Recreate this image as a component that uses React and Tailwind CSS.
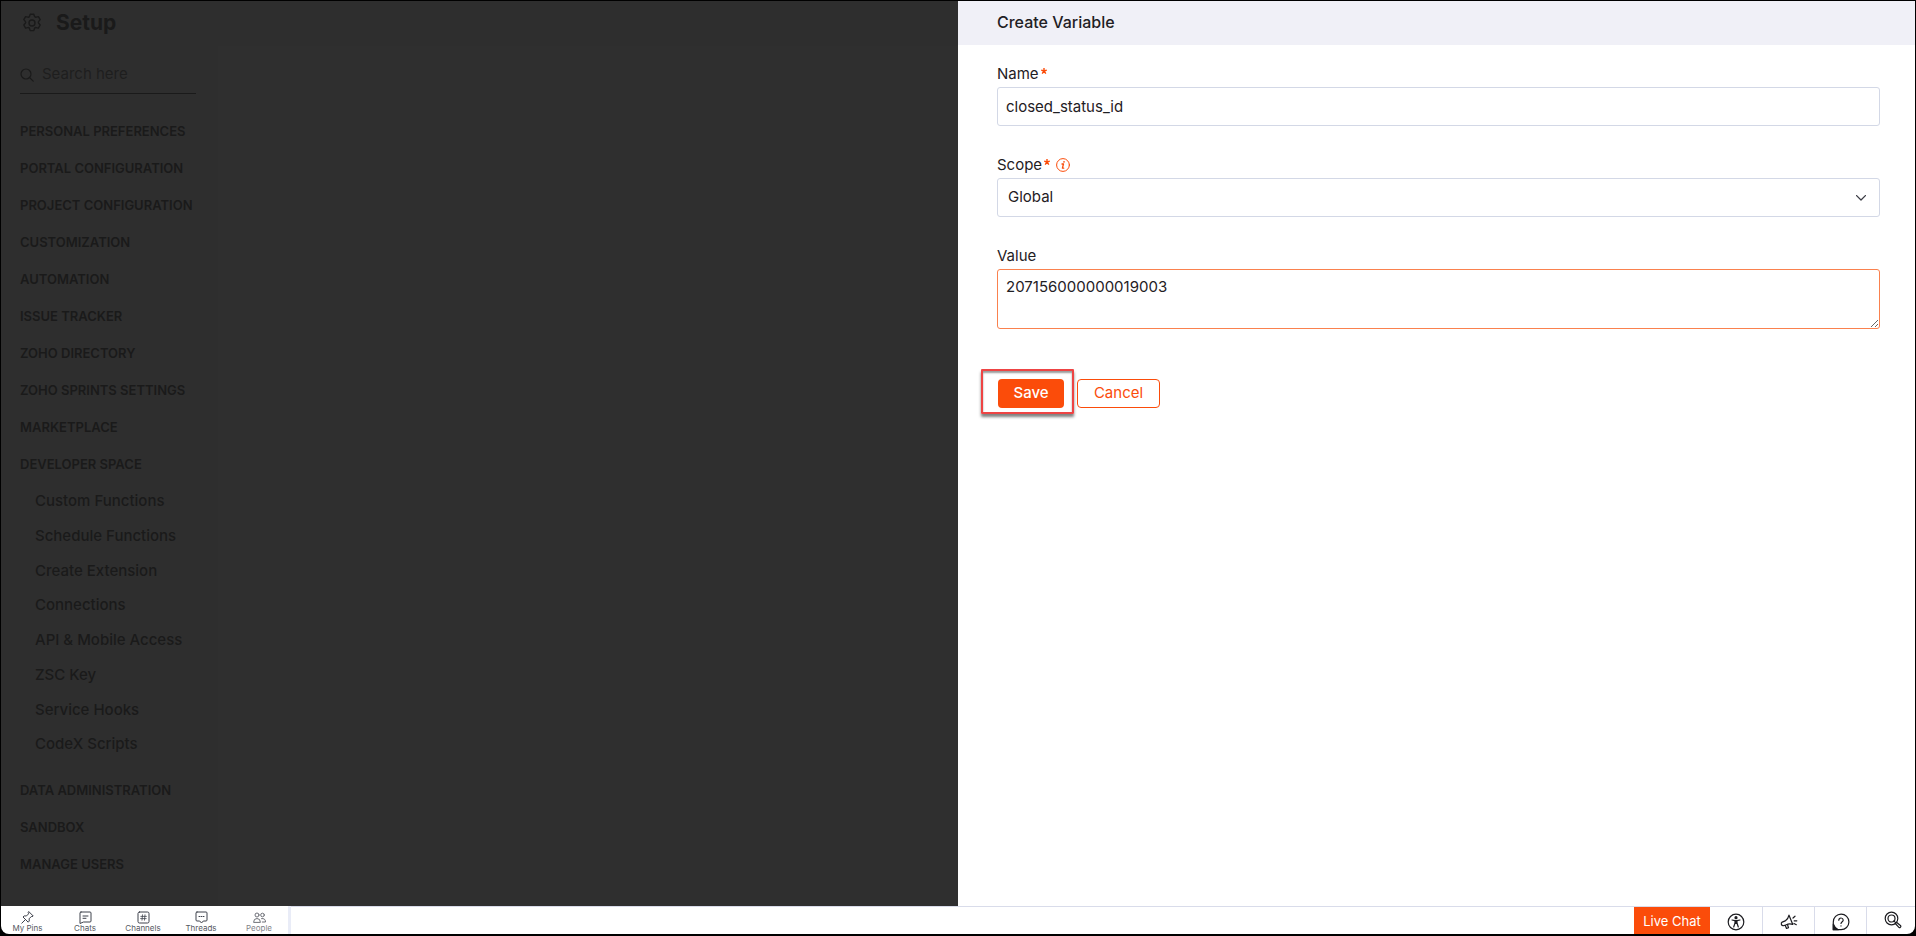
import { useState } from "react";

const topSections = [
  "PERSONAL PREFERENCES",
  "PORTAL CONFIGURATION",
  "PROJECT CONFIGURATION",
  "CUSTOMIZATION",
  "AUTOMATION",
  "ISSUE TRACKER",
  "ZOHO DIRECTORY",
  "ZOHO SPRINTS SETTINGS",
  "MARKETPLACE",
  "DEVELOPER SPACE",
];

const developerItems = [
  "Custom Functions",
  "Schedule Functions",
  "Create Extension",
  "Connections",
  "API & Mobile Access",
  "ZSC Key",
  "Service Hooks",
  "CodeX Scripts",
];

const bottomSections = ["DATA ADMINISTRATION", "SANDBOX", "MANAGE USERS"];

function Icon({ className, children, viewBox = "0 0 24 24", width = 1.5 }) {
  return (
    <svg
      className={className}
      viewBox={viewBox}
      fill="none"
      stroke="currentColor"
      strokeWidth={width}
      strokeLinecap="round"
      strokeLinejoin="round"
      aria-hidden="true"
    >
      {children}
    </svg>
  );
}

function SectionLink({ label }) {
  return (
    <li>
      <a href="#" className="flex h-[37px] items-center text-[13px] font-semibold whitespace-nowrap">
        {label}
      </a>
    </li>
  );
}

function Sidebar() {
  return (
    <aside className="flex w-[217px] shrink-0 flex-col text-[#1a1a1a]">
      <header className="flex h-[43px] items-center gap-[14px] pl-[21px]">
        <Icon className="size-5" viewBox="0 0 20 20" width={1.4}>
          <circle cx="10" cy="10" r="3" />
          <path d="M8.2 1.2h3.6l.7 2.2q.5 1 1.7.7l2.2-.5 1.8 3-1.5 1.8q-.8.9 0 1.9l1.5 1.7-1.8 3.1-2.3-.5q-1.100-.2-1.600.8l-.7 2.200H8.200l-.7-2.200q-.5-1-1.700-.8l-2.200.5-1.800-3.100 1.500-1.700q.8-1 0-1.900L1.800 6.600l1.800-3 2.200.5q1.200.3 1.700-.7z" />
        </Icon>
        <h1 className="text-[21px] leading-7 font-bold">Setup</h1>
      </header>
      <div className="mr-[22px] ml-[19px] flex h-[50px] items-center gap-2 border-b border-[#1a1a1a] pt-[12px]">
        <Icon className="size-[14px] shrink-0" viewBox="0 0 14 14" width={1.2}>
          <circle cx="6" cy="6" r="5" />
          <path d="M9.500 9.500L13.200 13.200" />
        </Icon>
        <input
          type="search"
          aria-label="Search here"
          placeholder="Search here"
          className="w-full min-w-0 bg-transparent pb-px text-[15px] text-[#1a1a1a] outline-none placeholder:text-[#1e1e1e]"
        />
      </div>
      <nav className="pt-[19px] pl-[19px]">
        <ul>
          {topSections.map((s) => (
            <SectionLink key={s} label={s} />
          ))}
        </ul>
        <ul className="mt-px mb-[10px] grid h-[278px] pl-[15px] text-[15px] font-medium">
          {developerItems.map((s) => (
            <li key={s} className="flex items-center">
              <a href="#" className="whitespace-nowrap">
                {s}
              </a>
            </li>
          ))}
        </ul>
        <ul>
          {bottomSections.map((s) => (
            <SectionLink key={s} label={s} />
          ))}
        </ul>
      </nav>
    </aside>
  );
}

function Required() {
  return (
    <svg className="mb-[6px] ml-[2px] size-[6px]" viewBox="0 0 6 6" stroke="#fb4c0a" strokeWidth="1.4" aria-hidden="true">
      <path d="M3 0V3M.2 2.200L3 3M5.800 2.200L3 3M1.200 5.600L3 3M4.800 5.600L3 3" />
    </svg>
  );
}

function VariablePanel() {
  const [name, setName] = useState("closed_status_id");
  const [scope, setScope] = useState("Global");
  const [value, setValue] = useState("207156000000019003");
  return (
    <section className="flex-1 bg-white text-[#1f2024]">
      <header className="flex h-11 items-center bg-[#f0f0f7] pb-[2px] pl-[39px]">
        <h2 className="text-base font-medium">Create Variable</h2>
      </header>
      <form className="flex flex-col pt-[18px] pr-[35px] pl-[39px]" onSubmit={(e) => e.preventDefault()}>
        <label htmlFor="name" className="mb-[2px] flex h-[22px] items-center text-[15px]">
          Name
          <Required />
        </label>
        <input
          id="name"
          value={name}
          onChange={(e) => setName(e.target.value)}
          className="mb-7 h-[39px] rounded-[3px] border border-[#d3d8e6] px-2 text-[15px] outline-none"
        />
        <div className="mb-[2px] flex h-[22px] items-center">
          <label htmlFor="scope" className="flex items-center text-[15px]">
            Scope
            <Required />
          </label>
          <button type="button" aria-label="About scope" className="ml-[6px] text-[#fb4c0a]">
            <Icon className="size-[14px]" viewBox="0 0 14 14" width={1}>
              <circle cx="7" cy="7" r="6.400" />
              <path d="M6 6h1.500L6.400 10.200h1.300" strokeWidth="1.300" />
              <path d="M8 3.700v.2" strokeWidth="1.600" />
            </Icon>
          </button>
        </div>
        <div className="mb-7 grid items-center">
          <select
            id="scope"
            value={scope}
            onChange={(e) => setScope(e.target.value)}
            className="col-start-1 row-start-1 h-[39px] appearance-none rounded-[3px] border border-[#d3d8e6] px-[10px] text-[15px] outline-none"
          >
            <option>Global</option>
          </select>
          <Icon className="pointer-events-none col-start-1 row-start-1 mr-[14px] h-[6px] w-[10px] justify-self-end text-[#3c3d45]" viewBox="0 0 10 6" width={1.300}>
            <path d="M.6.600L5 5L9.400.600" />
          </Icon>
        </div>
        <label htmlFor="value" className="mb-[2px] flex h-[22px] items-center text-[15px]">
          Value
        </label>
        <textarea
          id="value"
          value={value}
          onChange={(e) => setValue(e.target.value)}
          className="h-[60px] rounded-[3px] border border-[#fa814e] px-2 py-[7px] text-[15px] leading-5 outline-none"
        />
        <div className="mt-10 -ml-4 flex items-baseline gap-[3px]">
          <div className="rounded-[1px] border-2 border-[#ee4444] pt-2 pr-2 pb-1 pl-[15px] shadow-[0_3px_3px_rgba(0,0,0,0.5),inset_0_2px_2px_rgba(0,0,0,0.4)]">
            <button type="submit" className="h-[29px] w-[66px] rounded-[4px] bg-[#fb4c0a] text-[15px] font-medium text-white">
              Save
            </button>
          </div>
          <button type="button" className="h-[29px] w-[83px] rounded-[4px] border border-[#fb4c0a] text-[15px] text-[#fb4c0a]">
            Cancel
          </button>
        </div>
      </form>
    </section>
  );
}

function ChatTab({ label, className = "w-[58px]", children }) {
  return (
    <button type="button" className={`flex flex-col items-center pt-[5px] text-[#3f424c] ${className}`}>
      <Icon className="size-[13px]" viewBox="0 0 13 13" width={1}>
        {children}
      </Icon>
      <span className="text-[8px] leading-[9px] whitespace-nowrap text-[#555862]">{label}</span>
    </button>
  );
}

function ToolButton({ label, children, className = "w-[52px] border-l" }) {
  return (
    <button type="button" aria-label={label} className={`flex items-center justify-center border-[#d9dcea] pt-[2px] text-[#1c1c20] ${className}`}>
      <Icon className="size-[18px]" viewBox="0 0 18 18" width={1.200}>
        {children}
      </Icon>
    </button>
  );
}

function BottomBar() {
  return (
    <footer className="flex h-7 overflow-hidden rounded-b-[8px] bg-white">
      <div className="flex border-r-[3px] border-[#e9ecf7]">
        <ChatTab label="My Pins" className="w-[55px] pr-[2px]">
          <path d="M8 .8l4.200 4.200-1.200.7-.7-.2-2.200 2.300.2 2.200-1.100 1.200L2 6l1.200-1.100 2.200.1L7.600 2.800 7.300 2zM4.400 8.600L.8 12.200" />
        </ChatTab>
        <ChatTab label="Chats">
          <path d="M2 1h9q1 0 1 1v8q0 1-1 1H4.500L1 12.500V2q0-1 1-1zM4 5h5M4 7.300h3" />
        </ChatTab>
        <ChatTab label="Channels">
          <rect x="1" y="1" width="11" height="11" rx="1.500" />
          <path d="M5.500 3.800L5 9.200M8 3.800l-.5 5.400M3.800 5.400h5.600M3.600 7.600h5.600" strokeWidth=".8" />
        </ChatTab>
        <ChatTab label="Threads">
          <path d="M2 1h9q1 0 1 1v7q0 1-1 1H8.300L6.500 12 4.700 10H2q-1 0-1-1V2q0-1 1-1zM4 5.500h.8M6.100 5.500h.8M8.200 5.500H9" />
        </ChatTab>
        <ChatTab label="People" className="w-[58px] opacity-75">
          <circle cx="4" cy="4" r="2" />
          <circle cx="9.500" cy="4" r="1.800" />
          <path d="M.6 11q0-3.500 3.400-3.500T7.400 11zM8.500 7.600q4-.6 4 3.400H9.300" />
        </ChatTab>
      </div>
      <div className="flex flex-1 justify-end border-t border-[#d9dcea]">
        <button type="button" className="w-[76px] bg-[#fb4c0a] pt-[3px] text-[13px] text-white">
          Live Chat
        </button>
        <ToolButton label="Accessibility" className="w-[52px]">
          <circle cx="9" cy="9" r="7.800" />
          <circle cx="9" cy="4.700" r="1" fill="currentColor" />
          <path d="M5 7l3 .7h2L13 7M8 7.700V10l-1.300 4M10 7.700V10l1.300 4M8.500 8v2.500h1V8" />
        </ToolButton>
        <ToolButton label="Announcements">
          <path d="M9 2.200l3.800 9.300q-3.300-1.200-6.600.2l-2.700 1q-1.600.2-2.100-1.200-.5-1.500.8-2.400l3-1.200Q8.300 6 9 2.200zM5.200 12.300l1.300 3.200 2-.7-1-3.200M13 5l2-1.800M14.200 7.800h2.600M14 10.500l2.300 1.200" />
        </ToolButton>
        <ToolButton label="Help">
          <path d="M1.300 16.700V9A7.800 7.800 0 1 1 9 16.700z" />
          <path d="M1.300 11q1.200 4 5 5.700h-5z" fill="currentColor" />
          <path d="M6.800 7.200Q7 5 9 5t2.200 2q0 1-1 1.700T9 10.500M9 12.800v.1" />
        </ToolButton>
        <ToolButton label="Search" className="w-[49px] border-l pb-[4px] pl-[3px]">
          <circle cx="7.500" cy="7.500" r="6.300" />
          <circle cx="7.500" cy="7.500" r="3.500" />
          <path d="M12.500 11.300l4.200 3.500q.5 1-.3 1.500-.8.700-1.500 0L11.300 12.500M9.800 9.800l1.800 1.800" />
        </ToolButton>
      </div>
    </footer>
  );
}

export default function App() {
  return (
    <div className="flex min-h-screen flex-col bg-black px-px pt-px pb-[2px] font-['Inter','Liberation_Sans',sans-serif]">
      <main className="flex flex-1">
        <div className="flex w-1/2 shrink-0 bg-[#2e2e2e]">
          <Sidebar />
          <div className="mt-[45px] flex-1 bg-[#2f2f2f]" />
        </div>
        <VariablePanel />
      </main>
      <BottomBar />
    </div>
  );
}
